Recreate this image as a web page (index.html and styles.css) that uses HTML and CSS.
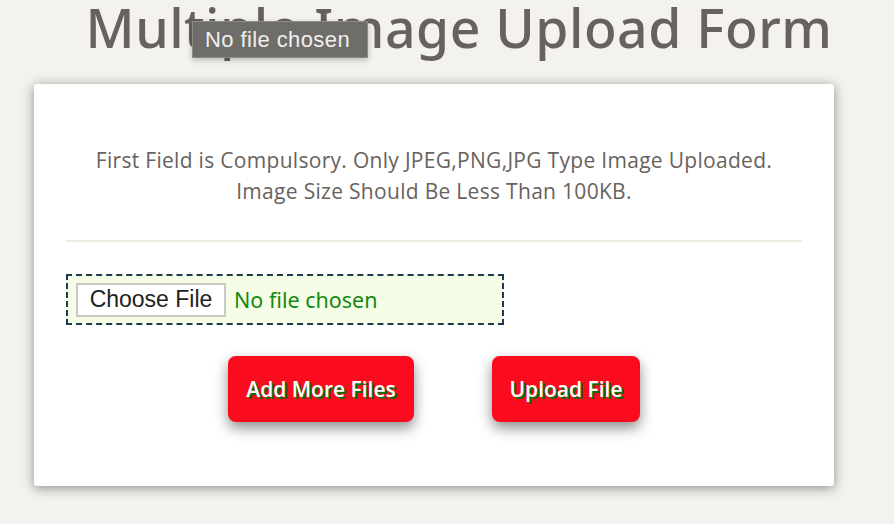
FILE: index.html
```html
<!DOCTYPE html>
<html>
<head>
<meta charset="utf-8">
<link rel="stylesheet" href="styles.css">
</head>
<body>
<h1 class="title">Multiple Image Upload Form</h1>
<div class="tooltip">No file chosen</div>
<div class="card">
  <p class="note">First Field is Compulsory. Only JPEG,PNG,JPG Type Image Uploaded.<br>Image Size Should Be Less Than 100KB.</p>
  <hr class="rule">
  <div class="file-box">
    <span class="choose">Choose File</span>
    <span class="status">No file chosen</span>
  </div>
  <div class="actions">
    <button class="btn btn-add">Add More Files</button>
    <button class="btn btn-upload">Upload File</button>
  </div>
</div>
</body>
</html>
```
FILE: styles.css
```css
html, body {
  margin: 0;
  padding: 0;
  background: #f3f2ee;
  width: 894px;
  height: 524px;
  overflow: hidden;
  position: relative;
}
.title {
  margin: 0;
  padding: 0 0 0 24px;
  height: 84px;
  box-sizing: border-box;
  text-align: center;
  font-family: "Noto Sans", sans-serif;
  font-weight: 500;
  font-size: 53.5px;
  line-height: 56px;
  color: #67625c;
  letter-spacing: 0.5px;
}
.tooltip {
  position: absolute;
  left: 192px;
  top: 21px;
  width: 176px;
  height: 37px;
  box-sizing: border-box;
  background: #6f6d69;
  border: 1px solid #8d8b87;
  color: #efefef;
  font-family: "Liberation Sans", Arial, sans-serif;
  font-size: 22px;
  letter-spacing: 0.4px;
  line-height: 35px;
  padding-left: 12px;
  white-space: nowrap;
  box-shadow: 0 2px 6px rgba(0,0,0,0.25);
}
.card {
  margin-left: 34px;
  width: 800px;
  height: 402px;
  box-sizing: border-box;
  background: #fff;
  border-radius: 3px;
  box-shadow: 0 2px 12px rgba(60,55,45,0.55);
  padding: 61px 32px 0;
}
.note {
  margin: 0;
  text-align: center;
  font-family: "Open Sans", sans-serif;
  font-size: 21px;
  letter-spacing: 0.3px;
  line-height: 31px;
  color: #68625c;
}
.rule {
  margin: 33px 0 32px;
  border: 0;
  height: 2px;
  background: #eeebe2;
}
.file-box {
  width: 438px;
  height: 51px;
  box-sizing: border-box;
  border: 2px dashed #1d3a50;
  background: #f5fde7;
  display: flex;
  align-items: center;
  padding-left: 8px;
  gap: 8px;
}
.choose {
  width: 150px;
  height: 34px;
  box-sizing: border-box;
  background: #fff;
  border: 2px solid #c9c9c9;
  font-family: "Liberation Sans", Arial, sans-serif;
  font-size: 23px;
  color: #222;
  display: flex;
  align-items: center;
  justify-content: center;
  white-space: nowrap;
}
.status {
  font-family: "Noto Sans", sans-serif;
  font-size: 21.5px;
  color: #148a14;
}
.actions {
  display: flex;
  margin-top: 31px;
  padding-left: 162px;
  gap: 78px;
}
.btn {
  height: 66px;
  border: 0;
  border-radius: 8px;
  background: #fa0c1e;
  color: #fff;
  font-family: "Open Sans", sans-serif;
  font-weight: 600;
  font-size: 21px;
  text-shadow: 2px 2px 0 #0c6e0c;
  box-shadow: 0 6px 14px rgba(0,0,0,0.45);
  padding: 0;
}
.btn-add { width: 186px; }
.btn-upload { width: 148px; }
```
